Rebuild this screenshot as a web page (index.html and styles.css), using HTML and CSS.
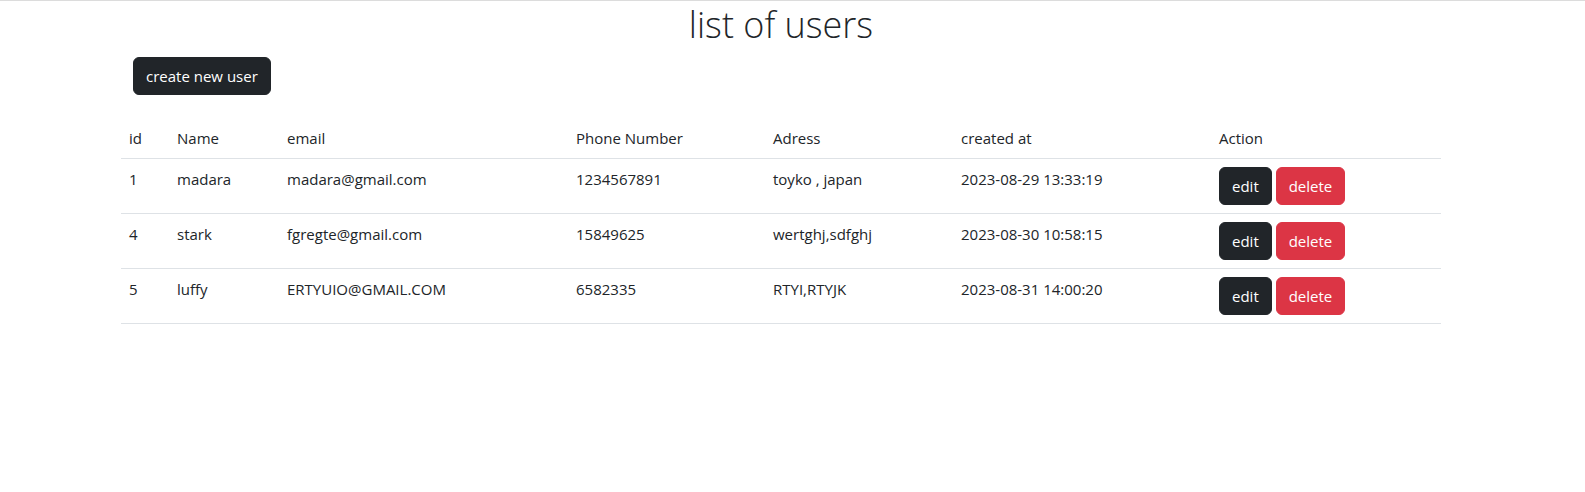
FILE: index.html
```html
<!DOCTYPE html>
<html lang="en">
<head>
<meta charset="utf-8">
<title>list of users</title>
<link rel="stylesheet" href="styles.css">
</head>
<body>
<div class="container">
  <h1 class="title">list of users</h1>
  <div class="toolbar">
    <a class="btn btn-dark" href="#">create new user</a>
  </div>
  <table class="table">
    <thead>
      <tr>
        <th class="c-id">id</th>
        <th class="c-name">Name</th>
        <th class="c-email">email</th>
        <th class="c-phone">Phone Number</th>
        <th class="c-addr">Adress</th>
        <th class="c-created">created at</th>
        <th class="c-action">Action</th>
      </tr>
    </thead>
    <tbody>
      <tr>
        <td>1</td>
        <td>madara</td>
        <td>madara@gmail.com</td>
        <td>1234567891</td>
        <td>toyko , japan</td>
        <td>2023-08-29 13:33:19</td>
        <td><a class="btn btn-dark" href="#">edit</a> <a class="btn btn-danger" href="#">delete</a></td>
      </tr>
      <tr>
        <td>4</td>
        <td>stark</td>
        <td>fgregte@gmail.com</td>
        <td>15849625</td>
        <td>wertghj,sdfghj</td>
        <td>2023-08-30 10:58:15</td>
        <td><a class="btn btn-dark" href="#">edit</a> <a class="btn btn-danger" href="#">delete</a></td>
      </tr>
      <tr>
        <td>5</td>
        <td>luffy</td>
        <td>ERTYUIO@GMAIL.COM</td>
        <td>6582335</td>
        <td>RTYI,RTYJK</td>
        <td>2023-08-31 14:00:20</td>
        <td><a class="btn btn-dark" href="#">edit</a> <a class="btn btn-danger" href="#">delete</a></td>
      </tr>
    </tbody>
  </table>
</div>
</body>
</html>
```

FILE: styles.css
```css
* { box-sizing: border-box; }

html, body {
  margin: 0;
  background: #fff;
}

body {
  border-top: 1px solid #dcdcdc;
  font-family: "Open Sans", "Noto Sans", "Liberation Sans", sans-serif;
  font-size: 15px;
  line-height: 24px;
  color: #212529;
}

.container {
  width: 1320px;
  margin-left: 121px;
}

.title {
  margin: 0 0 8px;
  font-size: 36px;
  font-weight: 300;
  line-height: 48px;
  text-align: center;
  color: #212529;
}

.toolbar {
  padding-left: 12px;
  margin-bottom: 23px;
}

.btn {
  display: inline-block;
  padding: 6px 12px;
  font-size: 15px;
  line-height: 24px;
  border: 1px solid transparent;
  border-radius: 6px;
  text-decoration: none;
  color: #fff;
  vertical-align: middle;
}

.btn-dark {
  background: #212529;
  border-color: #212529;
}

.btn-danger {
  background: #dc3545;
  border-color: #dc3545;
}

.table {
  width: 1320px;
  border-collapse: collapse;
  table-layout: fixed;
}

.table th,
.table td {
  padding: 8px;
  font-weight: 400;
  text-align: left;
  vertical-align: top;
  border-bottom: 1px solid #dee2e6;
  white-space: nowrap;
}

.c-id { width: 48px; }
.c-name { width: 110px; }
.c-email { width: 289px; }
.c-phone { width: 197px; }
.c-addr { width: 188px; }
.c-created { width: 258px; }
.c-action { width: 230px; }
```
